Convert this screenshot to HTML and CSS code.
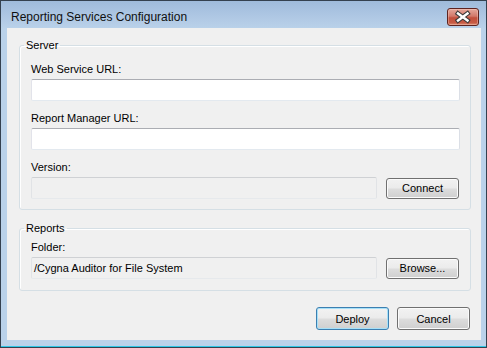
FILE: index.html
```html
<!DOCTYPE html>
<html>
<head>
<meta charset="utf-8">
<link rel="stylesheet" href="styles.css">
</head>
<body>
<div class="window">
  <div class="titlebar">
    <span class="title">Reporting Services Configuration</span>
    <div class="close">
      <svg width="32" height="18" viewBox="0 0 32 18">
        <path d="M11 5.5 L20.5 12.5 M20.5 5.5 L11 12.5" stroke="#3a3a3a" stroke-width="4.6" stroke-linecap="square" fill="none"/>
        <path d="M11 5.5 L20.5 12.5 M20.5 5.5 L11 12.5" stroke="#ffffff" stroke-width="2.4" stroke-linecap="square" fill="none"/>
      </svg>
    </div>
  </div>
  <div class="client">
    <fieldset class="group server">
      <legend>Server</legend>
      <label class="lbl first">Web Service URL:</label>
      <div class="field"></div>
      <label class="lbl">Report Manager URL:</label>
      <div class="field"></div>
      <label class="lbl">Version:</label>
      <div class="row">
        <div class="field ro"></div>
        <button class="btn small">Connect</button>
      </div>
    </fieldset>
    <fieldset class="group reports">
      <legend>Reports</legend>
      <label class="lbl first">Folder:</label>
      <div class="row">
        <div class="field ro">/Cygna Auditor for File System</div>
        <button class="btn small">Browse...</button>
      </div>
    </fieldset>
    <div class="actions">
      <button class="btn default">Deploy</button>
      <button class="btn">Cancel</button>
    </div>
  </div>
</div>
</body>
</html>
```

FILE: styles.css
```css
html, body {
  margin: 0;
  padding: 0;
  background: #ffffff;
}

.window {
  box-sizing: border-box;
  width: 487px;
  height: 348px;
  border: 1px solid #34414f;
  background: linear-gradient(#9fbbdb 0px, #b3cbe6 20px, #bad2ea 28px, #bad2ea 100%);
  box-shadow: inset 0 -1px 0 #2ec6e6;
  display: flex;
  flex-direction: column;
  font-family: "Liberation Sans", Arial, sans-serif;
  font-size: 11px;
  color: #000;
}

.titlebar {
  height: 27px;
  display: flex;
  align-items: flex-start;
  justify-content: space-between;
  box-sizing: border-box;
  padding-left: 10px;
}

.title {
  font-size: 12px;
  line-height: 15px;
  margin-top: 9px;
  color: #101010;
}

.close {
  box-sizing: border-box;
  width: 32px;
  height: 18px;
  margin-top: 7px;
  margin-right: 7px;
  border: 1px solid #5e2420;
  border-radius: 3px;
  background: linear-gradient(#e4a89c 0%, #d2786a 45%, #c24f3c 55%, #c65a44 85%, #dc8a70 100%);
  box-shadow: inset 0 0 0 1px rgba(255, 220, 210, 0.35);
  position: relative;
  overflow: hidden;
}

.close svg {
  position: absolute;
  left: -1px;
  top: -1px;
}

.client {
  width: 474px;
  height: 312px;
  margin-left: 6px;
  background: #f0f0f0;
  display: flex;
  flex-direction: column;
}

.group {
  margin: 0 10px 0 12px;
  padding: 0 10px 10px 11px;
  border: 1px solid #d5dfe5;
  border-radius: 3px;
  box-shadow: inset 1px 1px 0 #ffffff;
  display: flex;
  flex-direction: column;
  min-width: 0;
}

.server {
  margin-top: 10px;
}

.reports {
  margin-top: 11px;
  padding-bottom: 11px;
}

.group legend {
  padding: 0 2px;
  margin-left: -7px;
  line-height: 15px;
  color: #000;
}

.lbl {
  display: block;
  line-height: 13px;
  margin-top: 11px;
  margin-bottom: 3px;
}

.server .lbl.first {
  margin-top: 10px;
}

.reports .lbl.first {
  margin-top: 5px;
}

.field {
  box-sizing: border-box;
  height: 22px;
  background: #ffffff;
  border: 1px solid;
  border-color: #abadb3 #dbdfe6 #e3e9ef #e2e3ea;
  border-radius: 2px;
  line-height: 20px;
  padding-left: 2px;
  white-space: nowrap;
}

.field.ro {
  background: #f0f0f0;
  border-color: #cfd1d4 #e1e3e6 #e6e9ec #e1e3e6;
}

.row {
  display: flex;
  align-items: center;
}

.row .field {
  flex: 1;
  min-width: 0;
}

.btn {
  box-sizing: border-box;
  width: 73px;
  height: 23px;
  padding: 0;
  font-family: "Liberation Sans", Arial, sans-serif;
  font-size: 11px;
  color: #000;
  border: 1px solid #707070;
  border-radius: 3px;
  background: linear-gradient(#f2f2f2 0%, #ebebeb 48%, #dddddd 52%, #cfcfcf 100%);
  box-shadow: inset 0 0 0 1px #fbfbfb;
}

.btn.small {
  height: 21px;
  margin-left: 9px;
  margin-right: 1px;
}

.btn.default {
  border-color: #3c7fb1;
  box-shadow: inset 0 0 0 1px #a6e0f8;
}

.actions {
  display: flex;
  justify-content: flex-end;
  gap: 8px;
  margin-top: 16px;
  margin-right: 11px;
}
```
